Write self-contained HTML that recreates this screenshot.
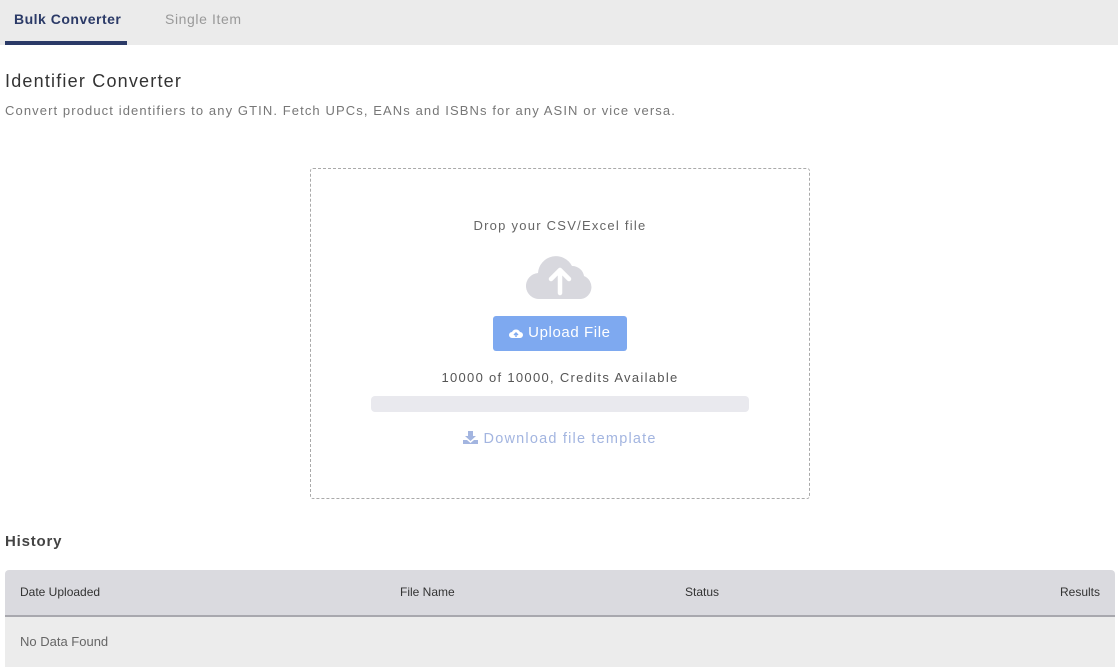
<!DOCTYPE html>
<html><head><style>
*{margin:0;padding:0;box-sizing:border-box}
body{width:1118px;height:669px;background:#fff;font-family:"Liberation Sans",sans-serif;position:relative;overflow:hidden;color:#444}
.tabs{position:absolute;left:0;top:0;width:1118px;height:45px;background:#ebebeb}
.tab{position:absolute;top:11px;font-size:14px}
.ul{position:absolute;left:5px;top:41px;width:122px;height:4px;background:#2b3a67}
.abs{position:absolute}
</style></head><body>
<div class="tabs">
<div class="tab" style="left:14px;color:#2b3a67;font-weight:bold;letter-spacing:0.5px">Bulk Converter</div>
<div class="tab" style="left:165px;color:#999;letter-spacing:0.6px">Single Item</div>
<div class="ul"></div>
</div>
<div class="abs" style="left:5px;top:71px;font-size:18px;color:#333;letter-spacing:1.2px">Identifier Converter</div>
<div class="abs" style="left:5px;top:103px;font-size:13px;color:#777;letter-spacing:1.1px">Convert product identifiers to any GTIN. Fetch UPCs, EANs and ISBNs for any ASIN or vice versa.</div>
<div class="abs" style="left:310px;top:168px;width:500px;height:331px;border:1px dashed #aaa;border-radius:3px"></div>
<div class="abs" style="left:310px;top:218px;width:500px;text-align:center;font-size:13px;color:#666;letter-spacing:1.25px">Drop your CSV/Excel file</div>
<svg class="abs" style="left:526px;top:252px" width="68" height="48" viewBox="0 0 68 48">
<path d="M14 47 A13 13 0 0 1 12 21 A18 18 0 0 1 46 14 A12 12 0 0 1 58 24 A12 12 0 0 1 55 47 Z" fill="#d8d8de"/>
<path d="M34 41 V18 M25 27 L34 18 L43 27" stroke="#fff" stroke-width="4.5" fill="none" stroke-linecap="round" stroke-linejoin="round"/>
</svg>
<div class="abs" style="left:493px;top:316px;width:134px;height:35px;background:#7ea9f0;border-radius:3px;color:#fff;font-size:15px;line-height:33px;text-align:center;letter-spacing:0.6px">
<svg width="14" height="10" viewBox="0 0 14 10" style="vertical-align:-1px"><path d="M3 10 A3 3 0 0 1 3 4 A4.5 4.5 0 0 1 11 4 A3 3 0 0 1 11 10Z" fill="#fff"/><path d="M7 9V5M5 7L7 5L9 7" stroke="#7ea9f0" stroke-width="1.4" fill="none"/></svg> Upload File</div>
<div class="abs" style="left:310px;top:370px;width:500px;text-align:center;font-size:13px;color:#555;letter-spacing:1.3px">10000 of 10000, Credits Available</div>
<div class="abs" style="left:371px;top:396px;width:378px;height:16px;background:#e9e9ee;border-radius:4px"></div>
<div class="abs" style="left:310px;top:431px;width:500px;text-align:center;font-size:14.5px;color:#a3b5e0;letter-spacing:1.2px"><svg width="15" height="13" viewBox="0 0 15 13" style="vertical-align:-1px"><path d="M5 0H10V5H13L7.5 10L2 5H5Z M0 9H4L7.5 12L11 9H15V13H0Z" fill="#a3b5e0"/></svg> Download file template</div>
<div class="abs" style="left:5px;top:533px;font-size:15px;font-weight:bold;color:#444;letter-spacing:0.8px">History</div>
<div class="abs" style="left:5px;top:570px;width:1110px;height:47px;background:#dadadf;border-radius:4px 4px 0 0;border-bottom:2px solid #a8a8ae;font-size:12px;color:#333">
<span class="abs" style="left:15px;top:15px">Date Uploaded</span>
<span class="abs" style="left:395px;top:15px">File Name</span>
<span class="abs" style="left:680px;top:15px">Status</span>
<span class="abs" style="right:15px;top:15px">Results</span>
</div>
<div class="abs" style="left:5px;top:617px;width:1110px;height:50px;background:#ececec;font-size:13px;color:#666"><span class="abs" style="left:15px;top:17px">No Data Found</span></div>
</body></html>
